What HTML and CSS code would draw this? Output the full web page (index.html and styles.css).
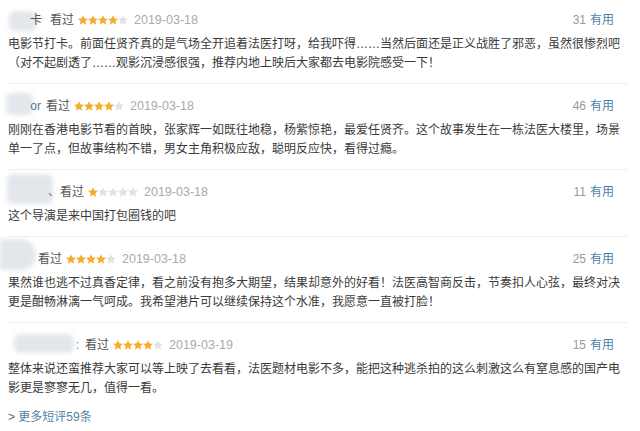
FILE: index.html
```html
<!DOCTYPE html>
<html lang="zh-CN">
<head>
<meta charset="utf-8">
<title>短评</title>
<link rel="stylesheet" href="styles.css">
</head>
<body>
<svg width="0" height="0" class="defs">
  <defs>
    <symbol id="star" viewBox="1.5 1.5 21 21"><path d="M12 1.8l3.1 6.9 7.4.7-5.6 5 1.7 7.4L12 17.9l-6.6 3.9 1.7-7.4-5.6-5 7.4-.7z"/></symbol>
  </defs>
</svg>
<div class="comments">
  <div class="item first">
    <div class="hd">
      <span class="user u1"><i class="mask"></i><span class="nm">卡</span></span>
      <span class="watched">看过</span>
      <span class="stars"><svg class="on"><use href="#star"/></svg><svg class="on"><use href="#star"/></svg><svg class="on"><use href="#star"/></svg><svg class="on"><use href="#star"/></svg><svg class="off"><use href="#star"/></svg></span>
      <span class="date">2019-03-18</span>
      <span class="votes"><span class="num">31</span><a class="useful">有用</a></span>
    </div>
    <p class="txt">电影节打卡。前面任贤齐真的是气场全开追着法医打呀，给我吓得……当然后面还是正义战胜了邪恶，虽然很惨烈吧（对不起剧透了……观影沉浸感很强，推荐内地上映后大家都去电影院感受一下！</p>
  </div>
  <div class="item">
    <div class="hd">
      <span class="user u2"><i class="mask"></i><span class="nm">or</span></span>
      <span class="watched">看过</span>
      <span class="stars"><svg class="on"><use href="#star"/></svg><svg class="on"><use href="#star"/></svg><svg class="on"><use href="#star"/></svg><svg class="on"><use href="#star"/></svg><svg class="off"><use href="#star"/></svg></span>
      <span class="date">2019-03-18</span>
      <span class="votes"><span class="num">46</span><a class="useful">有用</a></span>
    </div>
    <p class="txt">刚刚在香港电影节看的首映，张家辉一如既往地稳，杨紫惊艳，最爱任贤齐。这个故事发生在一栋法医大楼里，场景单一了点，但故事结构不错，男女主角积极应敌，聪明反应快，看得过瘾。</p>
  </div>
  <div class="item">
    <div class="hd">
      <span class="user u3"><i class="mask"></i><span class="nm">、</span></span>
      <span class="watched">看过</span>
      <span class="stars"><svg class="on"><use href="#star"/></svg><svg class="off"><use href="#star"/></svg><svg class="off"><use href="#star"/></svg><svg class="off"><use href="#star"/></svg><svg class="off"><use href="#star"/></svg></span>
      <span class="date">2019-03-18</span>
      <span class="votes"><span class="num">11</span><a class="useful">有用</a></span>
    </div>
    <p class="txt">这个导演是来中国打包圈钱的吧</p>
  </div>
  <div class="item">
    <div class="hd">
      <span class="user u4"><i class="mask"></i></span>
      <span class="watched">看过</span>
      <span class="stars"><svg class="on"><use href="#star"/></svg><svg class="on"><use href="#star"/></svg><svg class="on"><use href="#star"/></svg><svg class="on"><use href="#star"/></svg><svg class="off"><use href="#star"/></svg></span>
      <span class="date">2019-03-18</span>
      <span class="votes"><span class="num">25</span><a class="useful">有用</a></span>
    </div>
    <p class="txt">果然谁也逃不过真香定律，看之前没有抱多大期望，结果却意外的好看！法医高智商反击，节奏扣人心弦，最终对决更是酣畅淋漓一气呵成。我希望港片可以继续保持这个水准，我愿意一直被打脸！</p>
  </div>
  <div class="item last">
    <div class="hd">
      <span class="user u5"><i class="mask"></i><span class="nm">:</span></span>
      <span class="watched">看过</span>
      <span class="stars"><svg class="on"><use href="#star"/></svg><svg class="on"><use href="#star"/></svg><svg class="on"><use href="#star"/></svg><svg class="on"><use href="#star"/></svg><svg class="off"><use href="#star"/></svg></span>
      <span class="date">2019-03-19</span>
      <span class="votes"><span class="num">15</span><a class="useful">有用</a></span>
    </div>
    <p class="txt">整体来说还蛮推荐大家可以等上映了去看看，法医题材电影不多，能把这种逃杀拍的这么刺激这么有窒息感的国产电影更是寥寥无几，值得一看。</p>
  </div>
  <div class="more"><span class="arrow">&gt;</span> <a class="more-link">更多短评59条</a></div>
</div>
</body>
</html>
```

FILE: styles.css
```css
* { box-sizing: border-box; }
html, body {
  margin: 0;
  padding: 0;
  background: #fff;
}
body {
  font-family: "Liberation Sans", "Noto Sans CJK SC", sans-serif;
  font-size: 12px;
  color: #333;
  width: 640px;
  height: 431px;
  overflow: hidden;
}
.defs { position: absolute; width: 0; height: 0; }
.comments {
  margin-left: 8px;
  width: 620px;
}
.item {
  padding: 12px 0 10px;
  border-bottom: 1px solid #efefef;
}
.item.first { padding-top: 10px; }
.item.last { border-bottom: none; }
.hd {
  display: flex;
  align-items: center;
  height: 20px;
  line-height: 20px;
  padding-right: 14px;
  margin-bottom: 5px;
}
.user {
  position: relative;
  display: flex;
  justify-content: flex-end;
  color: #4a78a3;
  flex: none;
  height: 20px;
}
.user .nm { position: relative; padding-right: 5px; }
.mask {
  position: absolute;
  display: block;
  background: #e3e7ec;
  border-radius: 6px;
  filter: blur(2px);
}
.u1 { width: 42px; }
.u1 .mask { left: 1px; top: 1px; width: 28px; height: 20px; }
.u1 .nm { color: #555; padding-right: 8px; }
.u2 { width: 38px; }
.u2 .mask { left: -2px; top: -3px; width: 27px; height: 22px; }
.u2 .nm { padding-right: 5px; }
.u3 { width: 52px; }
.u3 .mask { left: -1px; top: -8px; width: 46px; height: 30px; }
.u3 .nm { color: #777; padding-right: 0; }
.u4 { width: 30px; }
.u4 .mask { left: -8px; top: -10px; width: 36px; height: 31px; border-radius: 0 16px 16px 0; }
.u5 { width: 77px; }
.u5 .mask { left: 6px; top: -1px; width: 60px; height: 19px; }
.u5 .nm { color: #777; padding-right: 6px; }
.watched { color: #555; flex: none; }
.stars {
  display: flex;
  margin-left: 4px;
  flex: none;
}
.stars svg {
  width: 10px;
  height: 10px;
  display: block;
}
.stars .on { fill: #f6ac2b; }
.stars .off { fill: #e2e2e2; }
.date {
  color: #aaa;
  margin-left: 6px;
  font-size: 12.5px;
}
.votes {
  margin-left: auto;
  display: flex;
  gap: 4px;
}
.num { color: #999; }
.useful { color: #4f7fa8; }
.txt {
  margin: 0;
  line-height: 19px;
  padding-right: 4px;
  color: #3a3a3a;
}
.more {
  line-height: 19px;
  margin-top: 0;
}
.arrow { color: #666; }
.more-link { color: #4f7fa8; }
```
